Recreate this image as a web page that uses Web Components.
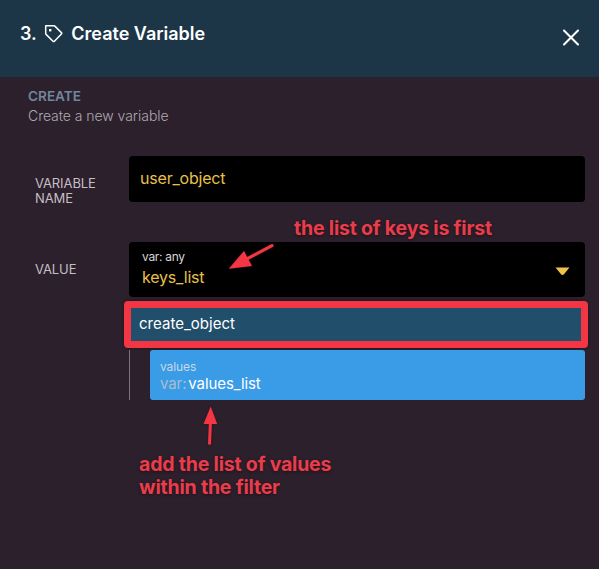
<!DOCTYPE html>
<html lang="en"><head><meta charset="utf-8"><title>Create Variable</title>
<style>
html,body{margin:0;background:#2c202c}
body{font-family:Inter,"Liberation Sans",sans-serif;width:599px;height:569px;overflow:hidden}
</style></head><body>
<variable-panel></variable-panel>
<script>
const define=(name,html)=>customElements.define(name,class extends HTMLElement{
  constructor(){super();this.attachShadow({mode:'open'}).innerHTML=html;}
});
define('panel-header',`<style>
:host{display:flex;box-sizing:border-box;height:77px;padding:0 19px 0 20px;background:#1c3648;color:#fff;justify-content:space-between;align-items:flex-start}
.title{display:flex;align-items:center;height:24px;margin-top:21px;font-size:18px;font-weight:600;letter-spacing:0;white-space:nowrap}
.tag{margin:1px 7px 0 7.5px}.close{margin-top:29px}svg{display:block}
</style><div class="title"><span>3.</span><svg class="tag" width="20" height="20" viewBox="0 0 20 20" fill="none" stroke="#fff" stroke-width="1.5" stroke-linejoin="round"><path d="M1.7 1.7h8.2q.6 0 1 .4l6.5 6.5q.7.7 0 1.4l-7 7.2q-.7.7-1.4 0L2.1 10.4q-.4-.4-.4-1z"/><path d="M5 5h2.4v2.4H5z" fill="#fff" stroke="none"/></svg><slot></slot></div>
<svg class="close" width="18" height="17" viewBox="0 0 18 17" stroke="#fff" stroke-width="2.1" stroke-linecap="round"><path d="M2 1.5l14 14M16 1.5l-14 14"/></svg>`);
define('panel-intro',`<style>
:host{display:block;padding:10px 0 0 28px;height:69px;white-space:nowrap}
b{display:block;font-size:13.6px;line-height:18px;font-weight:600;color:#70879e}
slot{display:block;margin-top:1px;font-size:14px;line-height:20px;font-weight:300;letter-spacing:-.04px;color:#b0a9b0}
</style><b>CREATE</b><slot></slot>`);
define('form-row',`<style>
:host{display:grid;grid-template-columns:94px 456px;padding-left:35px}
.label{display:block;margin-top:20px;font-size:13px;line-height:15px;letter-spacing:-.1px;color:#c4bfc4;white-space:pre-line}
</style><slot class="label" name="label"></slot><slot></slot>`);
define('text-field',`<style>
:host{display:flex;align-items:center;box-sizing:border-box;height:46px;padding:0 11px 2px;background:#000;border-radius:4px;color:#e8c14c;font-size:16px;letter-spacing:-.2px}
</style><slot></slot>`);
define('value-select',`<style>
:host{display:flex;align-items:flex-start;justify-content:space-between;box-sizing:border-box;height:55px;padding:0 15.5px 0 13px;background:#000;border-radius:4px;color:#e8c14c}
small{display:block;margin-top:7px;font-size:12px;line-height:16px;letter-spacing:-.3px;color:#d6d6d6}.value{font-size:16px;line-height:20px;margin-top:2px;letter-spacing:-.2px}
svg{margin-top:24.5px}
</style><div><small>var: any</small><div class="value"><slot></slot></div></div><svg width="15" height="9" viewBox="0 0 15 9"><path d="M.5.5h14L9 7.2q-1.5 1.6-3 0z" fill="#f0c247"/></svg>`);
define('filter-block',`<style>
:host{display:flex;align-items:center;box-sizing:border-box;width:464px;height:47px;margin:4px 0 0 -5px;padding:0 0 2px 8px;border:7px solid #f33643;border-radius:4px;background:#214f6b;box-shadow:0 0 3px #211019;color:#fff;font-size:15px;letter-spacing:.03px}
</style><slot></slot>`);
define('filter-argument',`<style>
:host{display:flex;box-sizing:border-box;height:50px;margin-top:2px;border-left:1px solid #7b747b;padding-left:20px}
.box{flex:1;box-sizing:border-box;padding:8px 10px;background:#3a9be6;border-radius:3px;color:#fff}
small{display:block;font-size:12px;line-height:17px;letter-spacing:-.1px;color:#c6d9e8}.value{font-size:15px;line-height:17px;letter-spacing:-.1px}.value span{color:#a7bfd1;margin-right:2px}
</style><div class="box"><small>values</small><div class="value"><span>var:</span><slot></slot></div></div>`);
define('callout-note',`<style>
:host{position:absolute;color:#e93d4a;font-size:19.5px;line-height:23px;font-weight:700;letter-spacing:-.19px;white-space:pre;text-shadow:0 1px 3px #20101b}
</style><slot></slot>`);
define('callout-arrows',`<style>:host{position:absolute;left:0;top:0;pointer-events:none}svg{display:block;filter:drop-shadow(0 0 1px #300f18)}</style>
<svg width="599" height="569" fill="#f33643" stroke="#f33643"><path d="M272 245.7L246 259.4" stroke-width="3.2" stroke-linecap="round"/><path d="M228.8 268.8L244 251L252 266z" stroke="none"/><path d="M209.5 444.5L210.4 422" stroke-width="3"/><path d="M210.7 406.5L217.2 424H203.5z" stroke="none"/></svg>`);
define('variable-panel',`<style>
:host{display:block;position:relative;width:599px;height:569px;background:#2c202c}
.stack{display:block}
.value-row{margin-top:36px}
.first{left:294px;top:216.5px}.second{left:139px;top:453px}
</style>
<panel-header>Create Variable</panel-header><panel-intro>Create a new variable</panel-intro>
<form-row><span slot="label">VARIABLE
NAME</span><text-field>user_object</text-field></form-row>
<form-row class="value-row"><span slot="label">VALUE</span><div class="stack"><value-select>keys_list</value-select><filter-block>create_object</filter-block><filter-argument>values_list</filter-argument></div></form-row>
<callout-note class="first">the list of keys is first</callout-note>
<callout-note class="second">add the list of values
within the filter</callout-note><callout-arrows></callout-arrows>`);
</script></body></html>
